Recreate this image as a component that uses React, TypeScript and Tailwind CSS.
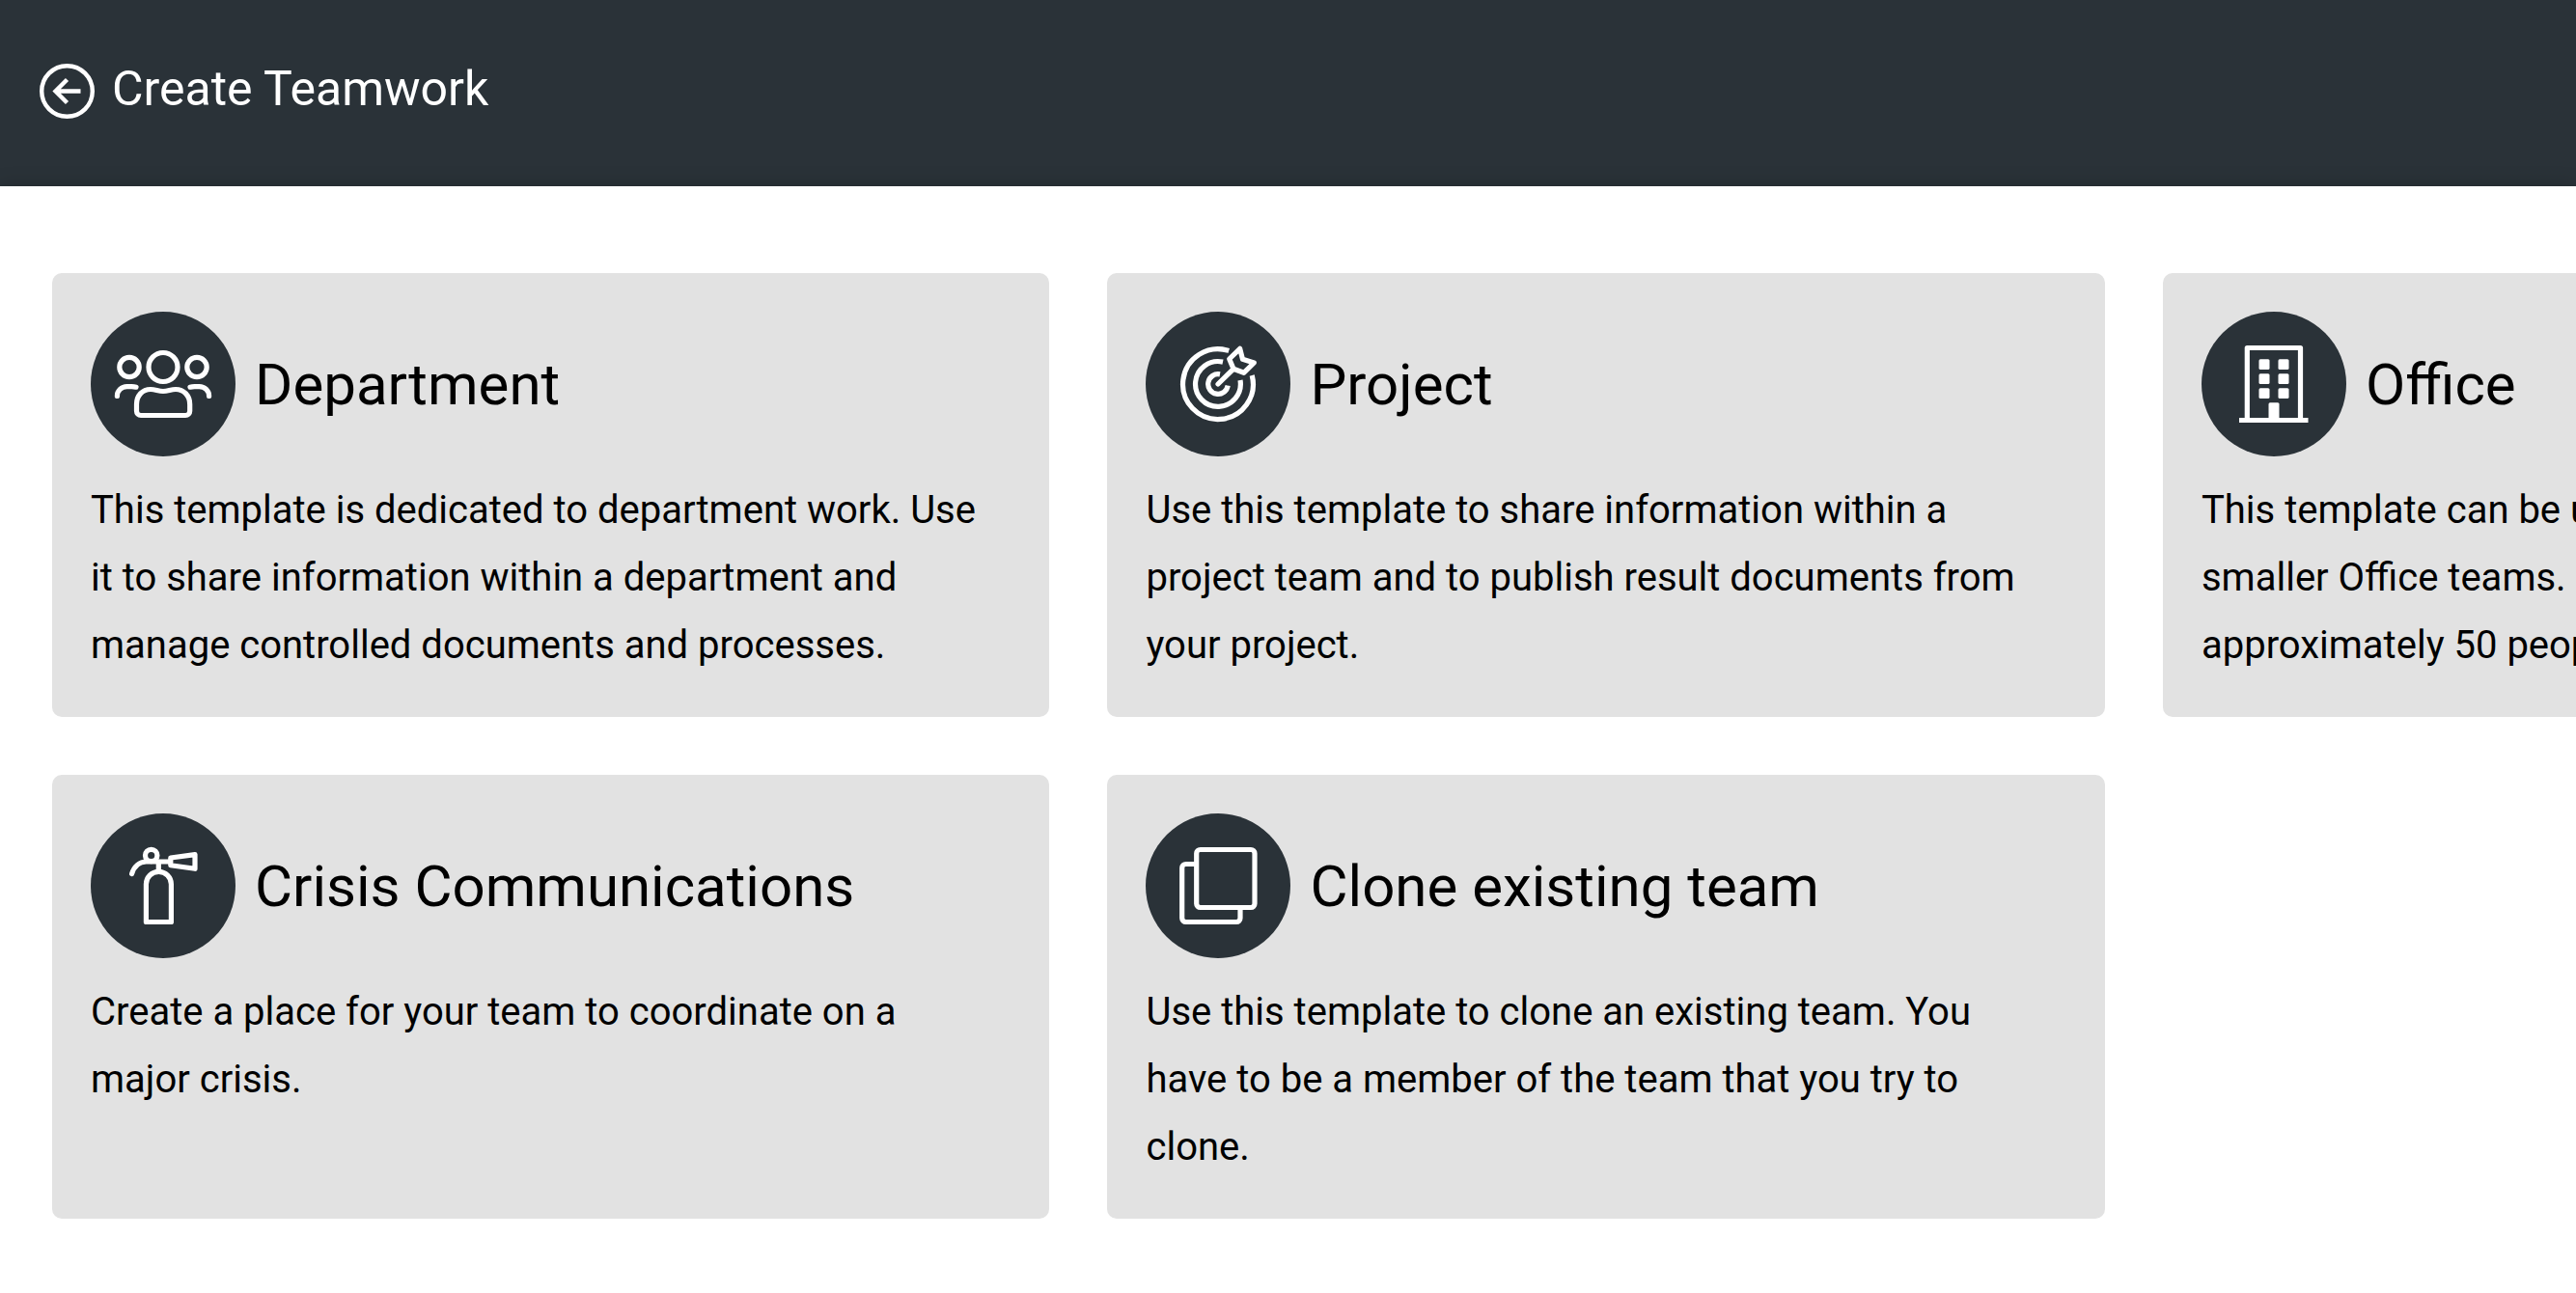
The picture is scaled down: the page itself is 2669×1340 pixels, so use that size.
import type { ReactNode } from "react";

type Template = { title: string; text: string; icon: ReactNode };

const DepartmentIcon = (
  <>
    <circle cx="75" cy="57.5" r="15" />
    <circle cx="40" cy="57.5" r="10.2" />
    <circle cx="110" cy="57.5" r="10.2" />
    <path d="M62 80.5C67 80.5 70 82.500 75 82.500S83 80.500 88 80.500C96.500 80.500 102.700 87 102.700 96V103a4.500 4.500 0 0 1-4.500 4.500H52A4.500 4.500 0 0 1 47.500 103V96C47.500 87 53.500 80.500 62 80.500Z" />
    <path d="M27.400 87.500C27.400 82 32 77.600 37.500 77.600H42.500Q45 77.600 47 78.200" strokeLinecap="round" />
    <path d="M122.600 87.500C122.600 82 118 77.600 112.500 77.600H107.500Q105 77.600 103 78.200" strokeLinecap="round" />
  </>
);

const ProjectIcon = (
  <>
    <path d="M86.200 40.500A36.400 36.400 0 1 0 110.200 66" />
    <path d="M80 52.100A23.400 23.400 0 1 0 98 71" />
    <path d="M77 64.900A10.300 10.300 0 1 0 85.200 76.500" />
    <path d="M75 75L91 59.300" strokeLinecap="round" />
    <path d="M86.700 49L97.700 38.300L100.500 49.300L112.300 53L101.700 63.300L91 59.300Z" strokeLinejoin="round" />
  </>
);

const OfficeIcon = (
  <>
    <path d="M47.300 111V37.500H102.500V111" strokeLinejoin="round" />
    <path d="M39 112.500H110.500" />
    <g fill="currentColor" stroke="none">
      <rect x="59.500" y="49.300" width="11" height="10.700" rx="1.500" />
      <rect x="79.500" y="49.300" width="11" height="10.700" rx="1.500" />
      <rect x="59.500" y="64.300" width="11" height="10.700" rx="1.500" />
      <rect x="79.500" y="64.300" width="11" height="10.700" rx="1.500" />
      <rect x="59.500" y="79.300" width="11" height="10.700" rx="1.500" />
      <rect x="79.500" y="79.300" width="11" height="10.700" rx="1.500" />
      <rect x="69.500" y="94.300" width="11" height="18" rx="1.500" />
    </g>
  </>
);

const CrisisIcon = (
  <>
    <circle cx="62.700" cy="43.500" r="6.200" />
    <path d="M42.600 62.500C45 55 50.500 50 57.500 50H82" strokeLinecap="round" />
    <path d="M70.300 50V60" />
    <path d="M57.400 112.500V73.300a13 13 0 0 1 26 0V112.500Z" strokeLinejoin="round" />
    <path d="M82.800 46L108 42.700V57.300L82.800 53.700Z" strokeLinejoin="round" />
  </>
);

const CloneIcon = (
  <>
    <rect x="52.700" y="37.500" width="60.300" height="60" rx="4" />
    <path d="M52 52.500H41.700a4 4 0 0 0-4 4V108.500a4 4 0 0 0 4 4H94a4 4 0 0 0 4-4V98" />
  </>
);

const templates: Template[] = [
  {
    title: "Department",
    text: "This template is dedicated to department work. Use it to share information within a department and manage controlled documents and processes.",
    icon: DepartmentIcon,
  },
  {
    title: "Project",
    text: "Use this template to share information within a project team and to publish result documents from your project.",
    icon: ProjectIcon,
  },
  {
    title: "Office",
    text: "This template can be used for collaboration in smaller Office teams. It is recommended for approximately 50 people.",
    icon: OfficeIcon,
  },
  {
    title: "Crisis Communications",
    text: "Create a place for your team to coordinate on a major crisis.",
    icon: CrisisIcon,
  },
  {
    title: "Clone existing team",
    text: "Use this template to clone an existing team. You have to be a member of the team that you try to clone.",
    icon: CloneIcon,
  },
];

function TemplateCard({ title, text, icon }: Template) {
  return (
    <a href="#" className="flex flex-col rounded-[10px] bg-[#e2e2e2] px-10 pt-10 pb-[39px] text-black">
      <span className="flex items-center gap-5">
        <svg
          viewBox="0 0 150 150"
          aria-hidden="true"
          className="size-[150px] shrink-0 rounded-full bg-[#2a3238] text-white"
          fill="none"
          stroke="currentColor"
          strokeWidth="5.2"
        >
          {icon}
        </svg>
        <h2 className="pt-0.5 text-[60px] leading-none">{title}</h2>
      </span>
      <p className="mt-[21px] pr-5 text-[40px] leading-[70px]">{text}</p>
    </a>
  );
}

export default function App() {
  return (
    <div className="min-h-screen overflow-hidden bg-white font-[Roboto,sans-serif]">
      <header className="flex h-[193px] items-center bg-[#2a3238] px-10 pb-1 text-white">
        <button type="button" aria-label="Back" className="mr-4 shrink-0">
          <svg viewBox="0 0 60 60" className="size-[60px]" fill="none" stroke="currentColor" strokeWidth="4.400">
            <circle cx="29.500" cy="29.500" r="26.300" />
            <path d="M43.500 29.500H17.500M29.500 17.500L17.500 29.500L29.500 41.500" />
          </svg>
        </button>
        <h1 className="pb-1.5 text-[50px] leading-none">Create Teamwork</h1>
      </header>
      <main className="relative bg-white px-[54px] py-[90px] shadow-[0_0_20px_rgba(0,0,0,0.2)]">
        <div className="grid w-[125.75%] auto-rows-fr grid-cols-3 gap-[60px]">
          {templates.map((template) => (
            <TemplateCard key={template.title} {...template} />
          ))}
        </div>
      </main>
    </div>
  );
}
